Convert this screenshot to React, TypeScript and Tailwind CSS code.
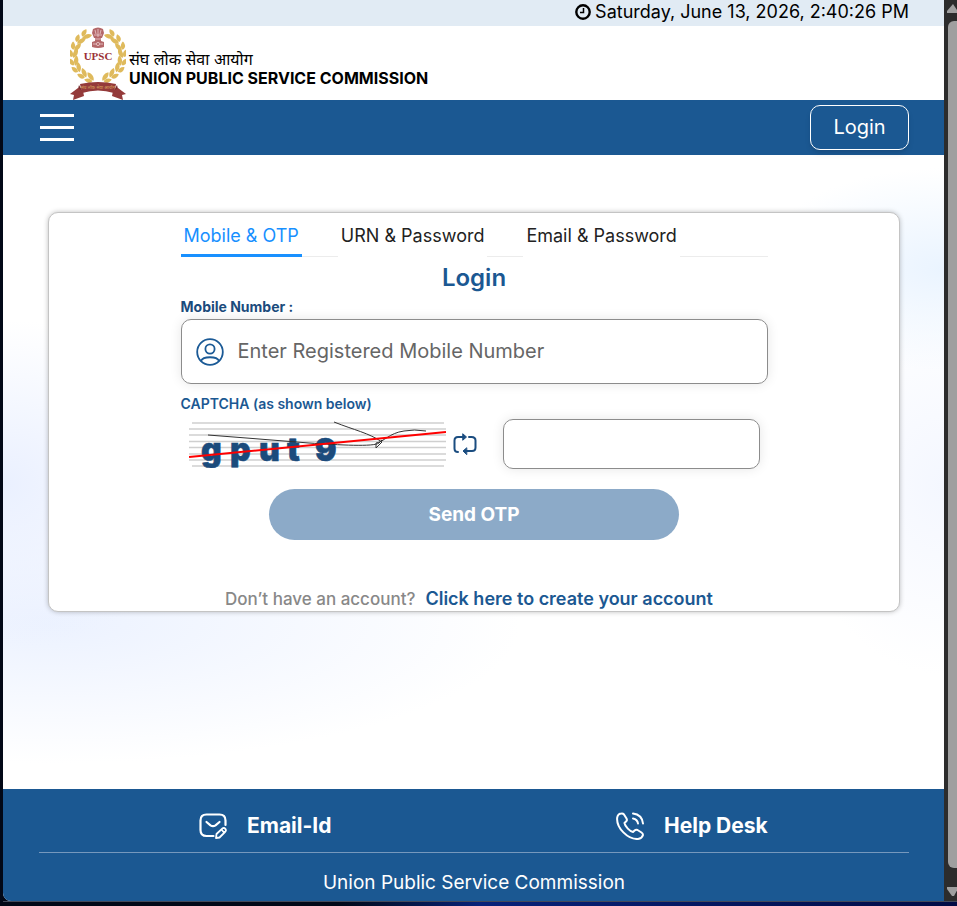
import { useState } from "react";

const tabs = ["Mobile & OTP", "URN & Password", "Email & Password"];

// One side of the laurel wreath, listed from the top leaf to the bottom one.
const leaves = [
  { x: 15, y: 8, r: 45 },
  { x: 9, y: 13, r: 30 },
  { x: 5, y: 20, r: 12 },
  { x: 3, y: 27, r: -5 },
  { x: 4, y: 35, r: -22 },
  { x: 7, y: 42, r: -38 },
  { x: 13, y: 48, r: -52 },
  { x: 20, y: 52, r: -65 },
];

function Wreath() {
  return (
    <g fill="#dfba5c">
      {leaves.map((l) => (
        <g key={l.y} transform={`translate(${l.x} ${l.y}) rotate(${l.r})`}>
          <path d="M-1 3C-5 2-5-2-3-5C0-3 1 0-1 3Z" />
          <path d="M0 4C-1 0 1-4 5-5C6-1 4 3 0 4Z" />
        </g>
      ))}
    </g>
  );
}

function Emblem() {
  return (
    <svg viewBox="0 0 56 73" className="h-[73px] w-14 shrink-0" role="img" aria-label="UPSC">
      <Wreath />
      <g transform="translate(56 0) scale(-1 1)">
        <Wreath />
      </g>
      <g fill="#b4686a">
        <path d="M23 2Q28-1 33 2L34 6L32 11H24L22 6Z" />
        <path d="M25 11H31V14H25Z" />
        <path d="M22 15Q28 12 34 15V20Q28 22 22 20Z" />
      </g>
      <g stroke="#f4dcdc" strokeWidth=".7" fill="none">
        <path d="M25 3L26 7M31 3L30 7M28 2V10M24 8H32M25 12H31" />
        <circle cx="28" cy="17" r="1.6" />
        <path d="M23 17H26M30 17H33" />
      </g>
      <text x="28" y="33" textAnchor="middle" fontSize="11" fontWeight="700" fill="#9b3036" fontFamily="Liberation Serif, serif">
        UPSC
      </text>
      <path fill="#77292b" d="M9 58L13 65L7 66Z M47 58L43 65L49 66Z" />
      <path fill="#943a3a" d="M8 61L0 67L4 68L3 73L14 69L13 64Z M48 61L56 67L52 68L53 73L42 69L43 64Z" />
      <path fill="#943a3a" d="M10 57Q28 53 46 57L44 66Q28 61 12 66Z" />
      <text x="28" y="62" textAnchor="middle" fontSize="4.500" fill="#d9a25c" fontFamily="Noto Sans, sans-serif">
        संघ लोक सेवा आयोग
      </text>
    </svg>
  );
}

function ClockIcon() {
  return (
    <svg viewBox="0 0 16 16" className="size-4 shrink-0" fill="none" stroke="#000" aria-hidden="true">
      <circle cx="8" cy="8" r="6.7" strokeWidth="2.4" />
      <path d="M8.500 4V8.500H5" strokeWidth="1.5" />
    </svg>
  );
}

function UserIcon() {
  return (
    <svg viewBox="0 0 28 28" className="size-7 shrink-0" fill="none" stroke="#1b5a96" strokeWidth="1.8" aria-hidden="true">
      <circle cx="14" cy="14" r="12.8" />
      <circle cx="14" cy="11" r="4.6" />
      <path d="M5 23C7 18 21 18 23 23" />
    </svg>
  );
}

function RefreshIcon() {
  return (
    <svg viewBox="0 0 24 22" className="h-[22px] w-6" fill="none" stroke="#1b4d80" strokeWidth="2" strokeLinecap="round" strokeLinejoin="round" aria-hidden="true">
      <path d="M5 19Q1.500 19 1.500 15.500V7.500Q1.500 4 5 4H11" />
      <path d="M16 4H18.500Q22.500 4 22.500 7.500V14.500Q22.500 18 19 18H13" />
      <path fill="#1b4d80" strokeWidth="1" d="M10 1L13.500 4L10 7Z M13.500 15L10 18L13.500 21.400Z" />
    </svg>
  );
}

function MailEditIcon() {
  return (
    <svg viewBox="0 0 28 26" className="h-[26px] w-7" fill="none" stroke="#fff" strokeWidth="2.2" strokeLinecap="round" strokeLinejoin="round" aria-hidden="true">
      <path d="M26.500 12V7.500Q26.500 1.500 20.500 1.500H7.500Q1.500 1.500 1.500 7.500V17Q1.500 23 7.500 23H14.500" />
      <path d="M7.500 9L11.500 12.300Q14 14 16.500 12.300L20.500 9" />
      <path strokeWidth="1.800" d="M17.500 21L23.500 15.300Q25.300 14.500 26.500 16Q27.500 17.500 26.200 18.800L20.500 24.500L17 25ZM22.500 16.500L25 19.500" />
    </svg>
  );
}

function PhoneIcon() {
  return (
    <svg viewBox="0 0 28 28" className="size-7" fill="none" stroke="#fff" strokeWidth="2" strokeLinecap="round" strokeLinejoin="round" aria-hidden="true">
      <path d="M5.500 1.500Q2 1.500 1.200 5.500C0 16 12 27.500 22 27Q26 26.500 27 23Q27 21.500 25.500 20.500L21.500 18Q20 17.200 18.600 18.500L17 20C14 19.500 9 14.500 8.500 11L10.500 9Q11.300 8 10.500 6.500L8 2.500Q7 1.300 5.500 1.500Z" />
      <path d="M17 1.500Q26 2.500 27 11.500M17 6.500Q21.500 7.500 22 11.500" />
    </svg>
  );
}

function CaptchaPicture() {
  return (
    <svg viewBox="0 0 257 48" className="h-12 w-[257px] shrink-0" role="img" aria-label="Captcha">
      <path stroke="#cfcfcf" strokeWidth="1.6" d="M3 3H255M0 9H257M0 15H257M0 21.500H257M0 27.500H257M0 34H257M0 40H257M3 46H255" />
      <g fill="#1b4b7c" stroke="#1b4b7c" strokeWidth=".6" fontFamily="Inter, sans-serif" fontWeight="900" fontSize="32">
        <text x="12" y="41">g</text>
        <text x="41" y="41">p</text>
        <text x="70" y="41">u</text>
        <text x="98" y="41">t</text>
        <text x="126" y="41">9</text>
      </g>
      <g fill="none" stroke="#333" strokeWidth="1">
        <path d="M19 15L70 19L120 23C150 25 185 27 190 23L193 20" />
        <path d="M145 2C165 10 180 13 193 22L187 28V23C195 22 200 13 215 11Q225 9 237 11" />
      </g>
      <path stroke="#f00" strokeWidth="2" d="M0 37L257 12" />
    </svg>
  );
}

function ScrollRail() {
  return (
    <div className="flex w-[13px] shrink-0 flex-col items-end overflow-hidden bg-[#2c2c2c]" aria-hidden="true">
      <svg viewBox="0 0 10 21" className="h-[21px] w-2.5">
        <path fill="#9f9f9f" d="M6 4L12 13H0V11Z" />
      </svg>
      <div className="w-[9px] flex-1 rounded-l-md bg-[#9f9f9f]" />
      <svg viewBox="0 0 10 33" className="h-[33px] w-2.5">
        <path fill="#9f9f9f" d="M0 19H12L7 28H5L0 21Z" />
      </svg>
    </div>
  );
}

export default function App() {
  const [active, setActive] = useState(0);

  return (
    <div className="flex min-h-screen flex-col bg-[#020817] pl-[3px] font-['Inter',sans-serif] text-black">
      <div className="flex flex-1">
        <div className="flex min-w-0 flex-1 flex-col overflow-hidden rounded-bl-lg bg-white">
          <div className="flex h-[26px] items-center justify-end gap-1 bg-[#e1ebf4] pr-[35px] pb-0.5 text-lg leading-6">
            <ClockIcon />
            <time>Saturday, June 13, 2026, 2:40:26 PM</time>
          </div>

          <header className="flex h-[74px] items-center gap-[3px] px-[67px]">
            <Emblem />
            <div className="pt-3 text-base leading-[19px]">
              <p className="font-['Inter','Noto_Sans_Devanagari','Noto_Sans',sans-serif]">संघ लोक सेवा आयोग</p>
              <p className="font-bold">UNION PUBLIC SERVICE COMMISSION</p>
            </div>
          </header>

          <nav className="flex h-[55px] items-center justify-between bg-[#1b5892] pr-[35px] pl-[37px] text-white">
            <button type="button" aria-label="Menu" className="flex w-[34px] flex-col gap-[9px]">
              <span className="h-[3px] bg-white" />
              <span className="h-[3px] bg-white" />
              <span className="h-[3px] bg-white" />
            </button>
            <button type="button" className="h-[45px] w-[99px] rounded-[10px] border border-white pb-0.5 text-xl shadow-md">
              Login
            </button>
          </nav>

          <main className="flex-1 bg-[radial-gradient(ellipse_22%_26%_at_0%_52%,#eaf0ff,transparent),radial-gradient(ellipse_50%_22%_at_5%_74%,#ecf2ff,transparent),radial-gradient(ellipse_20%_16%_at_100%_18%,#eaf4ff,transparent),radial-gradient(ellipse_16%_30%_at_100%_52%,#f4f7ff,transparent)] pt-[57px] pr-11 pl-[45px]">
            <section className="rounded-[10px] border border-[#c4c4c4] bg-white shadow-[0_0_5px_rgba(0,0,0,0.25)]">
              <form className="mx-auto flex max-w-[587px] flex-col" onSubmit={(e) => e.preventDefault()}>
                <div role="tablist" className="flex h-11 gap-9 border-b border-[#ececec]">
                  {tabs.map((tab, i) => (
                    <button
                      key={tab}
                      type="button"
                      role="tab"
                      aria-selected={i === active}
                      onClick={() => setActive(i)}
                      className={
                        i === active
                          ? "-mb-px border-b-3 border-[#1890ff] px-[3px] pt-1 text-lg text-[#1890ff]"
                          : "-mb-px border-b-3 border-white px-[3px] pt-1 text-lg text-[#222222]"
                      }
                    >
                      {tab}
                    </button>
                  ))}
                </div>
                <h1 className="pt-0.5 text-center text-2xl leading-[38px] font-semibold text-[#1b5892]">Login</h1>
                <label htmlFor="mobile" className="pb-0.5 text-sm leading-5 font-bold text-[#1b4b7c]">
                  Mobile Number :
                </label>
                <div className="flex h-[65px] items-center gap-[14px] rounded-[10px] border border-[#8c8c8c] px-[14px] shadow-[0_0_12px_rgba(0,0,0,0.1)]">
                  <UserIcon />
                  <input
                    id="mobile"
                    type="tel"
                    placeholder="Enter Registered Mobile Number"
                    className="min-w-0 flex-1 pb-0.5 text-xl outline-none placeholder:text-[#666666]"
                  />
                </div>
                <label htmlFor="captcha" className="mt-2 text-sm leading-6 font-semibold text-[#1b5892]">
                  CAPTCHA (as shown below)
                </label>
                <div className="mt-[3px] flex items-center justify-between px-2">
                  <div className="flex items-center gap-[7px]">
                    <CaptchaPicture />
                    <button type="button" aria-label="Refresh captcha">
                      <RefreshIcon />
                    </button>
                  </div>
                  <input
                    id="captcha"
                    type="text"
                    className="h-[50px] w-[257px] rounded-[10px] border border-[#8c8c8c] px-3 text-xl shadow-[0_0_12px_rgba(0,0,0,0.1)] outline-none"
                  />
                </div>
                <button type="submit" className="mt-5 h-[51px] w-[70%] self-center rounded-full bg-[#8caac8] pt-0.5 text-[19px] font-bold text-white">
                  Send OTP
                </button>
                <p className="mt-[47px] flex items-center justify-center gap-[10px] pr-2.5 text-[17px] leading-6 font-medium text-[#888888]">
                  Don’t have an account?
                  <a href="#register" className="text-lg leading-6 font-semibold text-[#1b5892]">
                    Click here to create your account
                  </a>
                </p>
              </form>
            </section>
          </main>

          <footer className="bg-[#1b5892] pr-[35px] pl-9 text-white">
            <div className="grid h-16 grid-cols-2 items-center border-b border-[#7698bd] pt-2.5 text-[21px] font-bold">
              <a href="#email" className="flex items-center gap-5 pl-40">
                <MailEditIcon />
                Email-Id
              </a>
              <a href="#help" className="flex items-center gap-5 pl-[142px]">
                <PhoneIcon />
                Help Desk
              </a>
            </div>
            <p className="pt-4 pb-1 text-center text-[19px] leading-7">Union Public Service Commission</p>
          </footer>
        </div>
        <ScrollRail />
      </div>
      <div className="h-[5px] bg-linear-to-r from-[#020817] from-35% via-[#08217a] via-50% to-[#020b45] shadow-[inset_0_1px_#444a5a]" />
    </div>
  );
}
